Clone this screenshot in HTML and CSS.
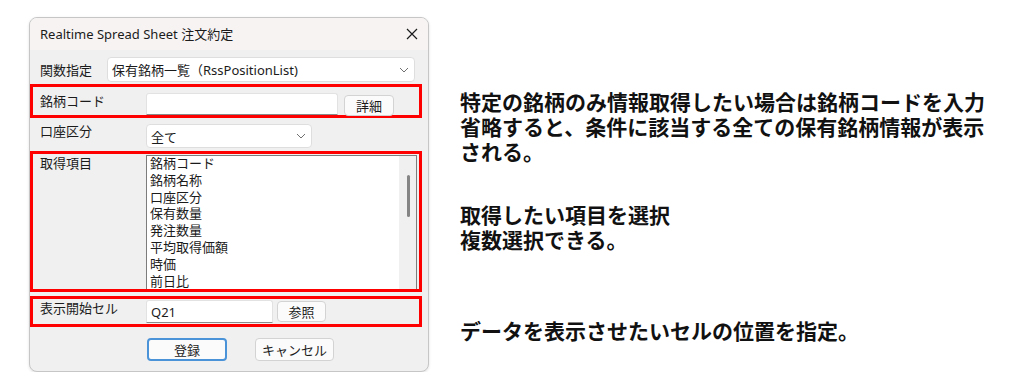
FILE: index.html
```html
<!DOCTYPE html>
<html lang="ja">
<head>
<meta charset="utf-8">
<title>Realtime Spread Sheet 注文約定</title>
<link rel="stylesheet" href="styles.css">
</head>
<body>
<div class="page">
  <div class="dialog">
    <div class="titlebar">
      <span class="title">Realtime Spread Sheet 注文約定</span>
      <svg class="close" width="12" height="12" viewBox="0 0 12 12"><path d="M1 1L11 11M11 1L1 11" stroke="#1b1b1b" stroke-width="1.2" fill="none"/></svg>
    </div>

    <div class="row row-func">
      <span class="label label-narrow">関数指定</span>
      <div class="combo combo-func">
        <span>保有銘柄一覧（RssPositionList)</span>
        <svg class="chev" width="10" height="6" viewBox="0 0 10 6"><path d="M1 1L5 5L9 1" stroke="#707070" stroke-width="1" fill="none"/></svg>
      </div>
    </div>

    <div class="mark mark-code">
      <span class="label">銘柄コード</span>
      <div class="input input-code"></div>
      <div class="btn btn-detail">詳細</div>
    </div>

    <div class="row row-account">
      <span class="label label-top">口座区分</span>
      <div class="combo combo-account">
        <span>全て</span>
        <svg class="chev" width="10" height="6" viewBox="0 0 10 6"><path d="M1 1L5 5L9 1" stroke="#707070" stroke-width="1" fill="none"/></svg>
      </div>
    </div>

    <div class="mark mark-items">
      <span class="label">取得項目</span>
      <div class="listbox">
        <div class="items">
          <div>銘柄コード</div>
          <div>銘柄名称</div>
          <div>口座区分</div>
          <div>保有数量</div>
          <div>発注数量</div>
          <div>平均取得価額</div>
          <div>時価</div>
          <div>前日比</div>
        </div>
        <div class="scrollbar"><div class="thumb"></div></div>
      </div>
    </div>

    <div class="mark mark-cell">
      <span class="label">表示開始セル</span>
      <div class="input input-cell">Q21</div>
      <div class="btn btn-ref">参照</div>
    </div>

    <div class="actions">
      <div class="btn btn-ok">登録</div>
      <div class="btn btn-cancel">キャンセル</div>
    </div>
  </div>

  <div class="notes">
    <p class="note note-1">特定の銘柄のみ情報取得したい場合は銘柄コードを入力<br>省略すると、条件に該当する全ての保有銘柄情報が表示<br>される。</p>
    <p class="note note-2">取得したい項目を選択<br>複数選択できる。</p>
    <p class="note note-3">データを表示させたいセルの位置を指定。</p>
  </div>
</div>
</body>
</html>
```

FILE: styles.css
```css
html, body {
  margin: 0;
  background: #ffffff;
}

.page {
  display: flex;
  align-items: flex-start;
  padding: 17px 0 0 29px;
}

.dialog {
  width: 400px;
  height: 355px;
  box-sizing: border-box;
  border: 1px solid #c6c6c6;
  border-radius: 8px;
  background: #f0f0f0;
  display: flex;
  flex-direction: column;
  overflow: hidden;
  flex: none;
  font-family: "Noto Sans", "Noto Sans CJK JP", sans-serif;
  font-size: 13px;
  color: #1b1b1b;
  box-shadow: 0 1px 3px rgba(0, 0, 0, 0.12);
}

.titlebar {
  height: 32px;
  flex: none;
  background: #f7f3f3;
  display: flex;
  align-items: center;
  justify-content: space-between;
  padding: 0 10px;
}

.title {
  line-height: 16px;
}

.close {
  display: block;
}

.row {
  display: flex;
  padding-left: 10px;
  flex: none;
}

.label {
  width: 106px;
  flex: none;
  line-height: 16px;
  white-space: nowrap;
}

.label-narrow {
  width: 67px;
}

.label-top {
  line-height: 14px;
}

.row-func {
  margin-top: 7px;
  height: 25px;
  align-items: center;
}

.combo {
  box-sizing: border-box;
  background: #ffffff;
  border: 1px solid #dedede;
  border-radius: 4px;
  display: flex;
  align-items: center;
  justify-content: space-between;
  padding: 0 5px 0 4px;
  white-space: nowrap;
}

.combo-func {
  width: 308px;
  height: 25px;
}

.chev {
  display: block;
  flex: none;
}

.mark {
  flex: none;
  box-sizing: border-box;
  margin-right: 6px;
  border: 3px solid #ff0000;
  padding-left: 7px;
  display: flex;
  align-items: flex-start;
}

.mark-code {
  margin-top: 2px;
  height: 34px;
  padding-top: 6px;
}

.input {
  box-sizing: border-box;
  background: #ffffff;
  border: 1px solid #e2e2e2;
  border-bottom-color: #8a8a8a;
  border-radius: 3px 3px 0 0;
  flex: none;
  padding-left: 4px;
  display: flex;
  align-items: center;
}

.input-code {
  width: 192px;
  height: 22px;
}

.btn {
  box-sizing: border-box;
  background: #fbfbfb;
  border: 1px solid #d3d3d3;
  border-radius: 4px;
  display: flex;
  align-items: center;
  justify-content: center;
  flex: none;
  line-height: 16px;
}

.btn-detail {
  margin-left: 6px;
  margin-top: 2px;
  width: 50px;
  height: 21px;
}

.row-account {
  margin-top: 6px;
  height: 24px;
  align-items: flex-start;
}

.combo-account {
  width: 166px;
  height: 24px;
}

.mark-items {
  margin-top: 3px;
  height: 141px;
  padding-top: 1px;
  overflow: hidden;
}

.listbox {
  box-sizing: border-box;
  width: 271px;
  height: 140px;
  flex: none;
  background: #ffffff;
  border: 1px solid #7c7c7c;
  border-bottom: none;
  display: flex;
}

.items {
  flex: 1;
  padding-left: 3px;
  margin-top: -1px;
  line-height: 16.8px;
  white-space: nowrap;
}

.scrollbar {
  width: 17px;
  flex: none;
  background: #f0f0f0;
  padding: 19px 0 0 8px;
  box-sizing: border-box;
}

.thumb {
  width: 3px;
  height: 42px;
  border-radius: 2px;
  background: #858585;
}

.mark-cell {
  margin-top: 4px;
  height: 31px;
  padding-top: 1px;
}

.input-cell {
  width: 127px;
  height: 23px;
  line-height: 16px;
}

.btn-ref {
  margin-left: 4px;
  margin-top: 1px;
  width: 49px;
  height: 21px;
}

.actions {
  flex: none;
  display: flex;
  gap: 28px;
  margin-top: 11px;
  padding-left: 117px;
}

.btn-ok {
  width: 80px;
  height: 23px;
  border: 2px solid #4a93d8;
}

.btn-cancel {
  width: 79px;
  height: 23px;
}

.notes {
  margin-left: 31px;
  margin-top: 72px;
  font-family: "Noto Sans CJK JP", sans-serif;
  font-weight: 700;
  font-size: 21px;
  line-height: 25px;
  color: #111111;
  white-space: nowrap;
}

.note {
  margin: 0;
}

.note-2 {
  margin-top: 38px;
}

.note-3 {
  margin-top: 66px;
}
```
